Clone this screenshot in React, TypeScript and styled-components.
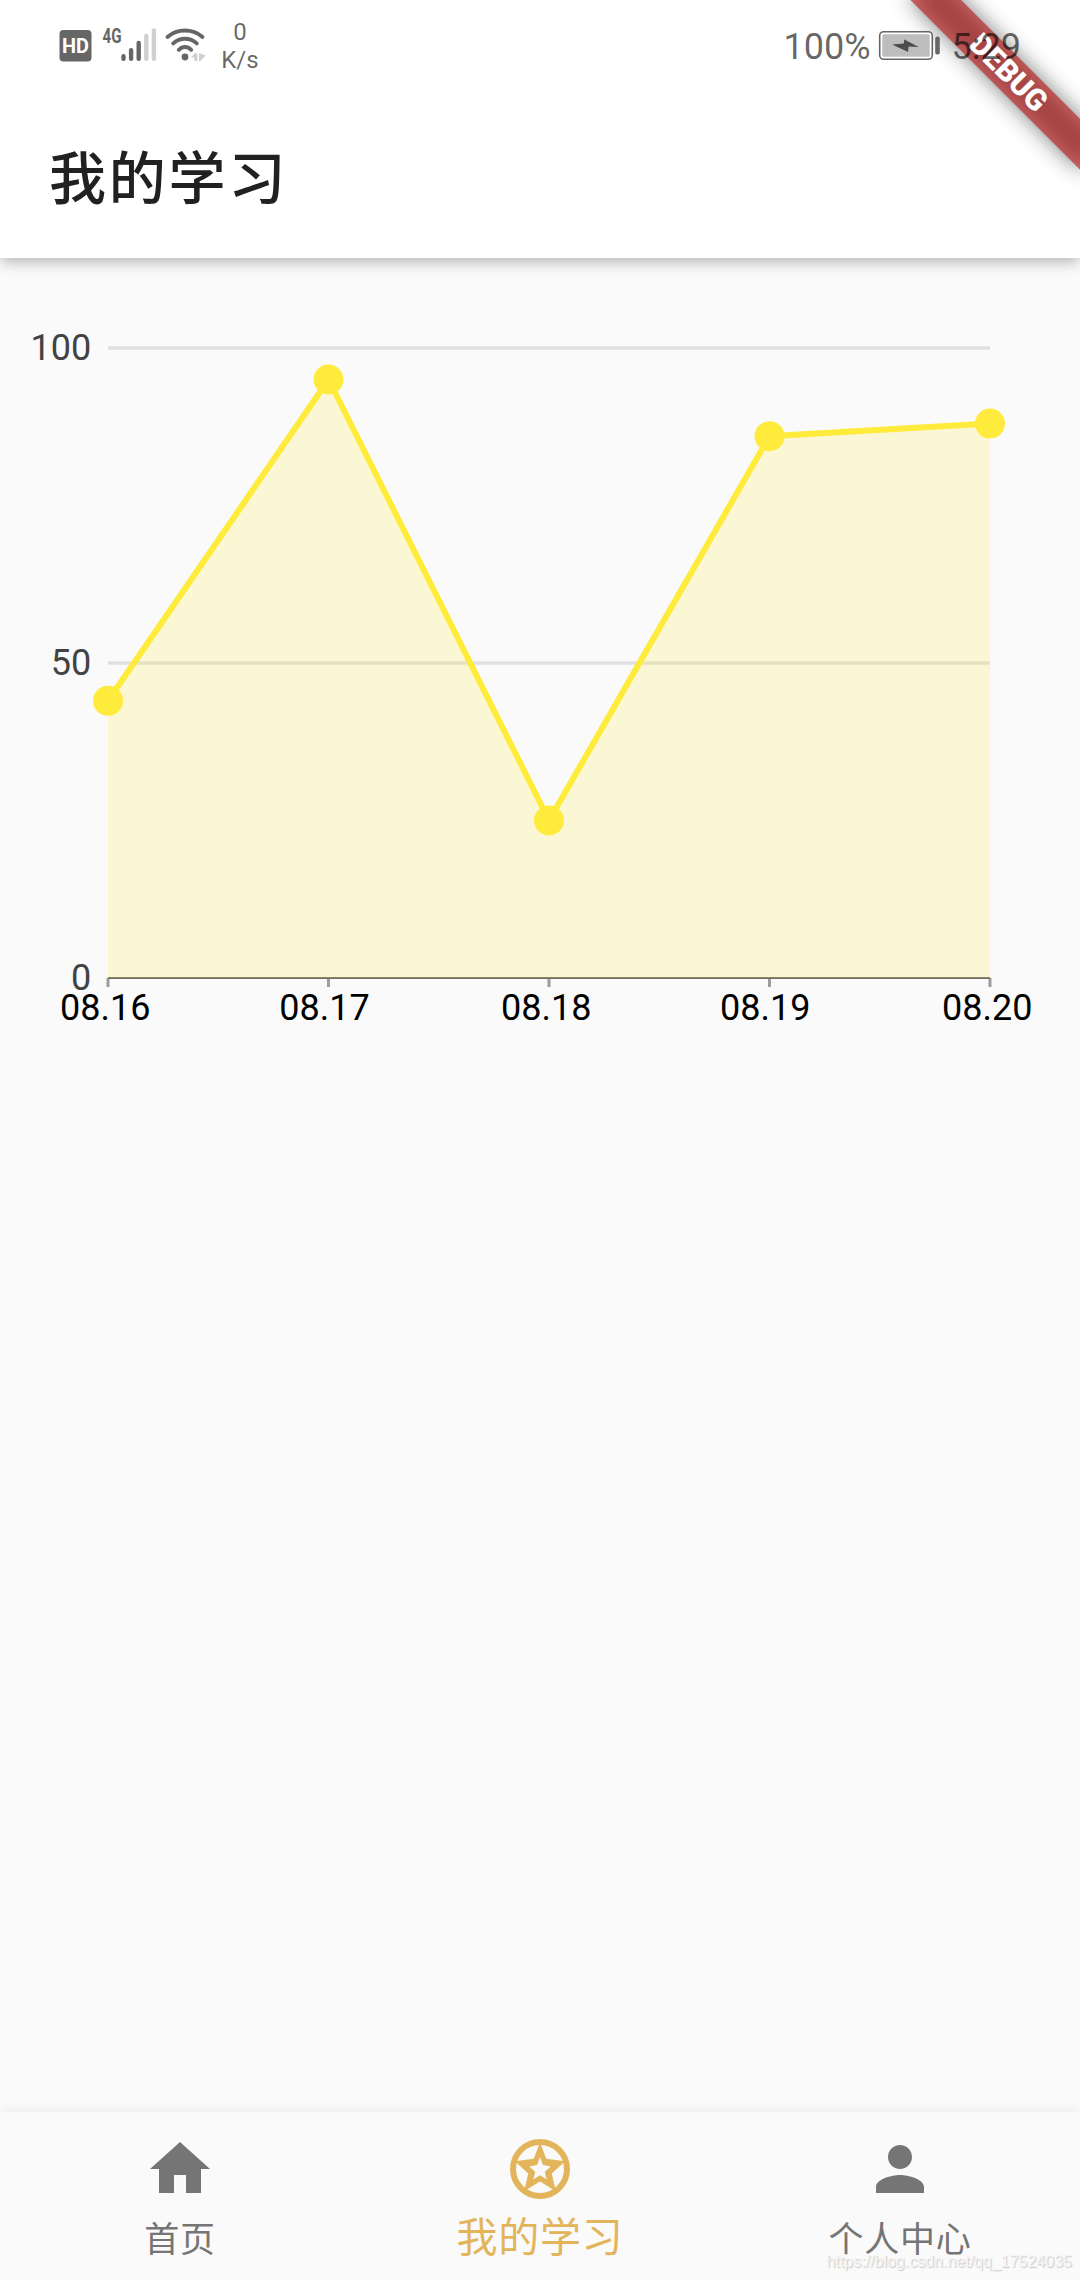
import React from 'react';
import styled, { createGlobalStyle } from 'styled-components';

const GlobalStyle = createGlobalStyle`
  html, body { margin: 0; padding: 0; background: #fafafa; }
  body { font-family: Roboto, "Noto Sans CJK SC", sans-serif; overflow: hidden; }
  *, *::before, *::after { box-sizing: border-box; }
`;

const Screen = styled.div`
  position: relative;
  display: flex;
  flex-direction: column;
  width: 1080px;
  height: 2280px;
  overflow: hidden;
  background: #fafafa;
`;

const Header = styled.header`
  position: relative;
  flex: none;
  height: 258px;
  background: #fff;
  box-shadow: 0 6px 12px -3px rgba(0, 0, 0, 0.16), 0 5px 15px rgba(0, 0, 0, 0.14);
`;

const StatusBar = styled.div`
  position: relative;
  z-index: 3;
  display: flex;
  justify-content: space-between;
  height: 90px;
  padding: 0 59px 0 54px;
  color: rgba(0, 0, 0, 0.6);
`;

const StatusGroup = styled.div`
  display: flex;
  align-items: flex-start;
`;

const Speed = styled.div`
  display: flex;
  flex-direction: column;
  align-items: center;
  width: 40px;
  padding-top: 18px;
  font-size: 24px;
  line-height: 28px;
`;

const StatusText = styled.span<{ $gap?: number }>`
  margin-top: 26px;
  margin-right: ${(p) => p.$gap ?? 0}px;
  font-size: 36px;
  line-height: 42px;
`;

const TitleBar = styled.div`
  display: flex;
  align-items: center;
  height: 168px;
  padding: 11px 0 0 49px;
`;

const Title = styled.h1`
  margin: 0;
  font-size: 57px;
  font-weight: 500;
  line-height: 72px;
  letter-spacing: 2.8px;
  color: #212121;
`;

const RibbonCorner = styled.div`
  position: absolute;
  z-index: 2;
  top: 0;
  right: 0;
  width: 300px;
  height: 300px;
  overflow: hidden;
`;

const Ribbon = styled.div`
  position: absolute;
  top: 84px;
  left: 180px;
  width: 240px;
  height: 36px;
  transform-origin: 120px -84px;
  transform: rotate(45deg);

  &::before {
    content: "";
    position: absolute;
    inset: 0;
    background: rgba(0, 0, 0, 0.5);
    filter: blur(11px);
  }
`;

const RibbonLabel = styled.div`
  position: relative;
  height: 36px;
  padding-left: 2px;
  background: rgba(183, 28, 28, 0.63);
  color: #fff;
  font-size: 30px;
  font-weight: 900;
  line-height: 36px;
  text-align: center;
`;

const Content = styled.main`
  flex: 1;
`;

const ChartSvg = styled.svg`
  display: block;
  font-family: Roboto, sans-serif;
  font-size: 36px;
`;

const BottomNav = styled.nav`
  display: flex;
  flex: none;
  height: 168px;
  background: #fafafa;
  box-shadow: 0 -2px 10px rgba(0, 0, 0, 0.06);
`;

const NavItem = styled.div<{ $active?: boolean }>`
  display: flex;
  flex: 1;
  flex-direction: column;
  align-items: center;
  padding-top: 21px;
  color: ${(p) => (p.$active ? '#e3b55b' : '#757575')};
  font-size: ${(p) => (p.$active ? 41 : 35)}px;
  letter-spacing: 0.8px;
  line-height: 60px;
`;

const NavIcon = styled.svg`
  width: 72px;
  height: 72px;
  fill: currentColor;
`;

const NavLabel = styled.span<{ $active?: boolean }>`
  margin-top: ${(p) => (p.$active ? 3 : 6)}px;
`;

const Watermark = styled.div`
  position: absolute;
  z-index: 4;
  right: 8px;
  bottom: 8px;
  font-family: "Liberation Sans", sans-serif;
  font-size: 16px;
  line-height: 20px;
  color: #f4f4f4;
  text-shadow: 1px 1px 1px rgba(0, 0, 0, 0.2);
`;

const SignalIcons = () => (
  <svg width="166" height="90" viewBox="54 0 166 90">
    <rect x="59.5" y="30" width="32" height="31.5" rx="4" fill="#666" />
    <text x="62" y="53" fontFamily="Roboto" fontWeight="700" fontSize="21" fill="#fff" textLength="27" lengthAdjust="spacingAndGlyphs">HD</text>
    <text x="102.6" y="43" fontFamily="Roboto" fontWeight="700" fontSize="20.5" fill="#666" textLength="19" lengthAdjust="spacingAndGlyphs">4G</text>
    <g strokeWidth="4.4" strokeLinecap="round" stroke="#666">
      <path d="M123.5 56.3V58.8M131.1 50.2V58.8M138.7 43V58.8" />
      <path d="M146.3 36V58.8M153.9 30.4V58.8" stroke="#d0d0d0" />
    </g>
    <g fill="none" stroke="#666" strokeWidth="3.9" strokeLinecap="round">
      <path d="M167.5 37C177.5 28.4 192.5 28.4 202.5 37" />
      <path d="M173.2 43.4C180 37.2 190 37.2 196.8 43.4" />
      <path d="M178.8 49.8C182.5 46.1 187.5 46.1 191.2 49.8" />
    </g>
    <circle cx="185" cy="57" r="3.4" fill="#666" />
    <path d="M190.6 57.6L195 53.3H197.4V61H194.4V57.6zM199 53.6V61H200.4L205.2 56V54.8H202V53.6z" fill="#d0d0d0" />
  </svg>
);

const Battery = () => (
  <svg width="74" height="90" viewBox="879 0 74 90">
    <rect x="880.7" y="31.7" width="52.6" height="27.6" rx="4" fill="#fff" stroke="#666" strokeWidth="1.6" />
    <rect x="883.3" y="34.3" width="47.4" height="22.4" rx="1.5" fill="#bdbdbd" />
    <path d="M893.5 44.4L905.5 46.2L905.3 39.4L919.8 46.9L909.2 46.6L909 51.8z" fill="#4c4c4c" />
    <path d="M893.5 44.4L909 51.8L909.5 46.6L905.3 39.4L904.8 43.6z" fill="#4c4c4c" />
    <rect x="936.2" y="36.5" width="4.6" height="18" rx="2" fill="#666" />
  </svg>
);

const scores = [
  { day: '08.16', value: 44, labelX: 60 },
  { day: '08.17', value: 95, labelX: 279.3 },
  { day: '08.18', value: 25, labelX: 501 },
  { day: '08.19', value: 86, labelX: 720 },
  { day: '08.20', value: 88, labelX: 942 },
];

const CHART_TOP = 258;
const toX = (i: number) => 108 + i * 220.5;
const toY = (v: number) => 978 - v * 6.3;

const ScoreChart = () => {
  const line = scores.map((s, i) => `${toX(i)},${toY(s.value)}`).join(' ');
  return (
    <ChartSvg width="1080" height="800" viewBox={`0 ${CHART_TOP} 1080 800`}>
      {[50, 100].map((v) => (
        <line key={v} x1="108" x2="990" y1={toY(v)} y2={toY(v)} stroke="#e0e0e0" strokeWidth="3.4" />
      ))}
      {[0, 50, 100].map((v) => (
        <text key={v} x="91.3" y={toY(v) + 12} textAnchor="end" fill="#424242">{v}</text>
      ))}
      {scores.map((s, i) => (
        <rect key={s.day} x={toX(i) - 1.5} y="978" width="3" height="9" fill="#9e9e9e" />
      ))}
      <rect x="108" y="977" width="882" height="2" fill="#6e6e6e" />
      <polygon points={`108,978 ${line} 990,978`} fill="#ffeb3b" fillOpacity="0.2" />
      <polyline points={line} fill="none" stroke="#ffeb3b" strokeWidth="6" />
      {scores.map((s, i) => (
        <circle key={s.day} cx={toX(i)} cy={toY(s.value)} r="15" fill="#ffeb3b" />
      ))}
      {scores.map((s) => (
        <text key={s.day} x={s.labelX} y="1020" fill="#000">{s.day}</text>
      ))}
    </ChartSvg>
  );
};

export default function App() {
  return (
    <Screen lang="zh-CN">
      <GlobalStyle />
      <RibbonCorner>
        <Ribbon>
          <RibbonLabel>DEBUG</RibbonLabel>
        </Ribbon>
      </RibbonCorner>
      <Header>
        <StatusBar>
          <StatusGroup>
            <SignalIcons />
            <Speed>
              <span>0</span>
              <span>K/s</span>
            </Speed>
          </StatusGroup>
          <StatusGroup>
            <StatusText $gap={7}>100%</StatusText>
            <Battery />
            <StatusText>5:29</StatusText>
          </StatusGroup>
        </StatusBar>
        <TitleBar>
          <Title>我的学习</Title>
        </TitleBar>
      </Header>
      <Content>
        <ScoreChart />
      </Content>
      <BottomNav>
        <NavItem>
          <NavIcon viewBox="0 0 24 24">
            <path d="M10 20v-6h4v6h5v-8h3L12 3 2 12h3v8z" />
          </NavIcon>
          <NavLabel>首页</NavLabel>
        </NavItem>
        <NavItem $active>
          <NavIcon viewBox="0 0 24 24">
            <circle cx="12" cy="12" r="9" fill="none" stroke="currentColor" strokeWidth="2" />
            <path
              fillRule="evenodd"
              d="M12 3.2L14.1 8.6L20.4 9.4L15.9 13.5L17.3 19.4L12 16.2L6.7 19.4L8.1 13.5L3.6 9.4L9.9 8.6zM12 8.1L11 10.7L8.4 11.2L10.4 12.9L9.8 15.4L12 14.1L14.2 15.4L13.6 12.9L15.6 11.2L13 10.7z"
            />
          </NavIcon>
          <NavLabel $active>我的学习</NavLabel>
        </NavItem>
        <NavItem>
          <NavIcon viewBox="0 0 24 24">
            <path d="M12 12c2.21 0 4-1.79 4-4s-1.79-4-4-4-4 1.79-4 4 1.79 4 4 4zm0 2c-2.67 0-8 1.34-8 4v2h16v-2c0-2.66-5.33-4-8-4z" />
          </NavIcon>
          <NavLabel>个人中心</NavLabel>
        </NavItem>
      </BottomNav>
      <Watermark>https://blog.csdn.net/qq_17524035</Watermark>
    </Screen>
  );
}
